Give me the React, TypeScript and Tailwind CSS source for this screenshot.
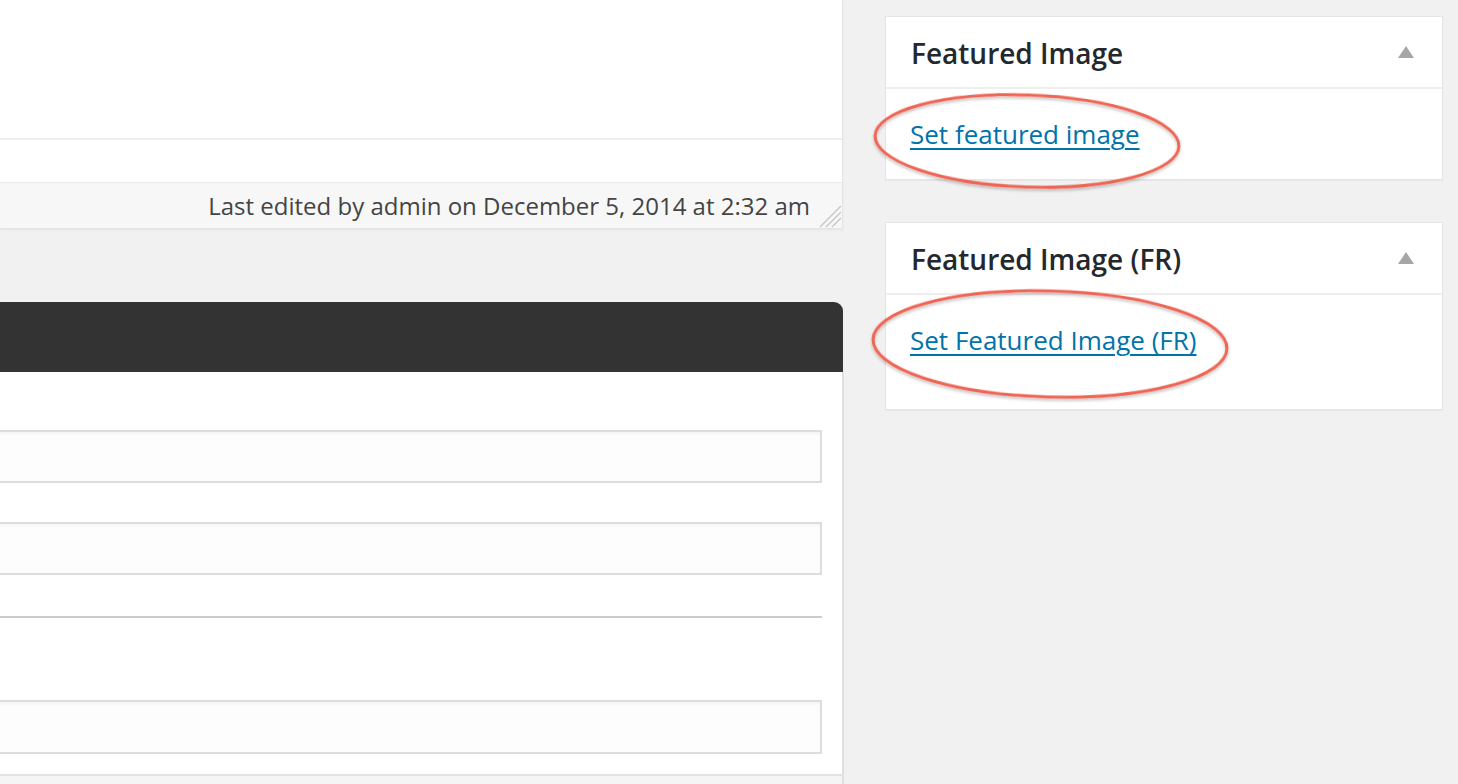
import React from "react";

const font = { fontFamily: '"Open Sans", "Noto Sans", "Liberation Sans", sans-serif' };

function Box({ title, link, bodyH, boxH }: { title: string; link: string; bodyH: string; boxH: string }) {
  return (
    <div className={`${boxH} w-[558px] bg-white border border-[#e5e5e5] shadow-[0_1px_1px_rgba(0,0,0,0.04)] flex flex-col`}>
      <div className="h-[72px] shrink-0 flex items-center justify-between pl-[25px] pr-[28px] pt-[2px] border-b-2 border-[#eeeeee]">
        <span className="text-[28px] font-semibold text-[#23282d] leading-none">{title}</span>
        <svg width="16" height="12" viewBox="0 0 16 12" className="mt-[-2px]">
          <polygon points="8,0 16,12 0,12" fill="#a6a6a6" />
        </svg>
      </div>
      <div className={`${bodyH} pl-[24px] pt-[27px]`}>
        <a href="#" className="text-[26px] leading-[36px] text-[#0073aa] underline underline-offset-[4px] decoration-[2px]">
          {link}
        </a>
      </div>
    </div>
  );
}

export default function App() {
  return (
    <div style={font} className="relative w-[1458px] h-[784px] bg-[#f1f1f1] flex overflow-hidden">
      {/* left column */}
      <div className="w-[844px] shrink-0 flex flex-col">
        <div className="w-[843px] h-[229px] bg-white border-r border-[#e5e5e5] border-b flex flex-col shadow-[0_1px_2px_rgba(0,0,0,0.06)]">
          <div className="h-[138px]" />
          <div className="h-[2px] bg-[#eeeeee]" />
          <div className="h-[42px]" />
          <div className="relative flex-1 bg-[#f7f7f7] border-t border-[#e8e8e8] flex items-center justify-end pr-[32px]">
            <span className="text-[24px] text-[#444444] leading-none">Last edited by admin on December 5, 2014 at 2:32 am</span>
            <svg className="absolute right-0 bottom-0" width="24" height="24" viewBox="0 0 24 24">
              <line x1="2" y1="23" x2="23" y2="2" stroke="#c4c4c4" strokeWidth="1.3" />
              <line x1="8" y1="23" x2="23" y2="8" stroke="#c4c4c4" strokeWidth="1.3" />
              <line x1="14" y1="23" x2="23" y2="14" stroke="#c4c4c4" strokeWidth="1.3" />
            </svg>
          </div>
        </div>
        <div className="h-[73px]" />
        <div className="w-[843px] h-[70px] bg-[#333333] rounded-tr-[9px]" />
        <div className="flex-1 bg-white border-r-2 border-[#e0e0e0] flex flex-col">
          <div className="h-[58px]" />
          <div className="ml-[-10px] w-[832px] h-[53px] border-2 border-[#dddddd] bg-[#fdfdfd] shadow-[inset_0_2px_3px_rgba(0,0,0,0.04)]" />
          <div className="h-[39px]" />
          <div className="ml-[-10px] w-[832px] h-[53px] border-2 border-[#dddddd] bg-[#fdfdfd] shadow-[inset_0_2px_3px_rgba(0,0,0,0.04)]" />
          <div className="h-[41px]" />
          <div className="w-[822px] h-[2px] bg-[#cccccc]" />
          <div className="h-[82px]" />
          <div className="ml-[-10px] w-[832px] h-[54px] border-2 border-[#dddddd] bg-[#fdfdfd] shadow-[inset_0_2px_3px_rgba(0,0,0,0.04)]" />
          <div className="h-[20px]" />
          <div className="flex-1 border-t-2 border-[#e2e2e2] bg-[#f5f5f5]" />
        </div>
      </div>
      {/* right column */}
      <div className="pl-[41px] pt-[16px] flex flex-col">
        <Box title="Featured Image" link="Set featured image" bodyH="h-[90px]" boxH="h-[164px]" />
        <div className="h-[42px]" />
        <Box title="Featured Image (FR)" link="Set Featured Image (FR)" bodyH="h-[114px]" boxH="h-[188px]" />
      </div>
      {/* annotations */}
      <svg className="absolute left-0 top-0 pointer-events-none" width="1458" height="784" viewBox="0 0 1458 784">
        <defs>
          <filter id="sh" x="-20%" y="-30%" width="140%" height="160%">
            <feDropShadow dx="0" dy="2" stdDeviation="1.5" floodColor="#000" floodOpacity="0.25" />
          </filter>
        </defs>
        <ellipse cx="1027" cy="141" rx="152" ry="46" transform="rotate(2 1027 141)" fill="none" stroke="#ee6555" strokeWidth="3" filter="url(#sh)" />
        <ellipse cx="1050" cy="344" rx="177" ry="53" transform="rotate(1.5 1050 344)" fill="none" stroke="#ee6555" strokeWidth="3" filter="url(#sh)" />
      </svg>
    </div>
  );
}
